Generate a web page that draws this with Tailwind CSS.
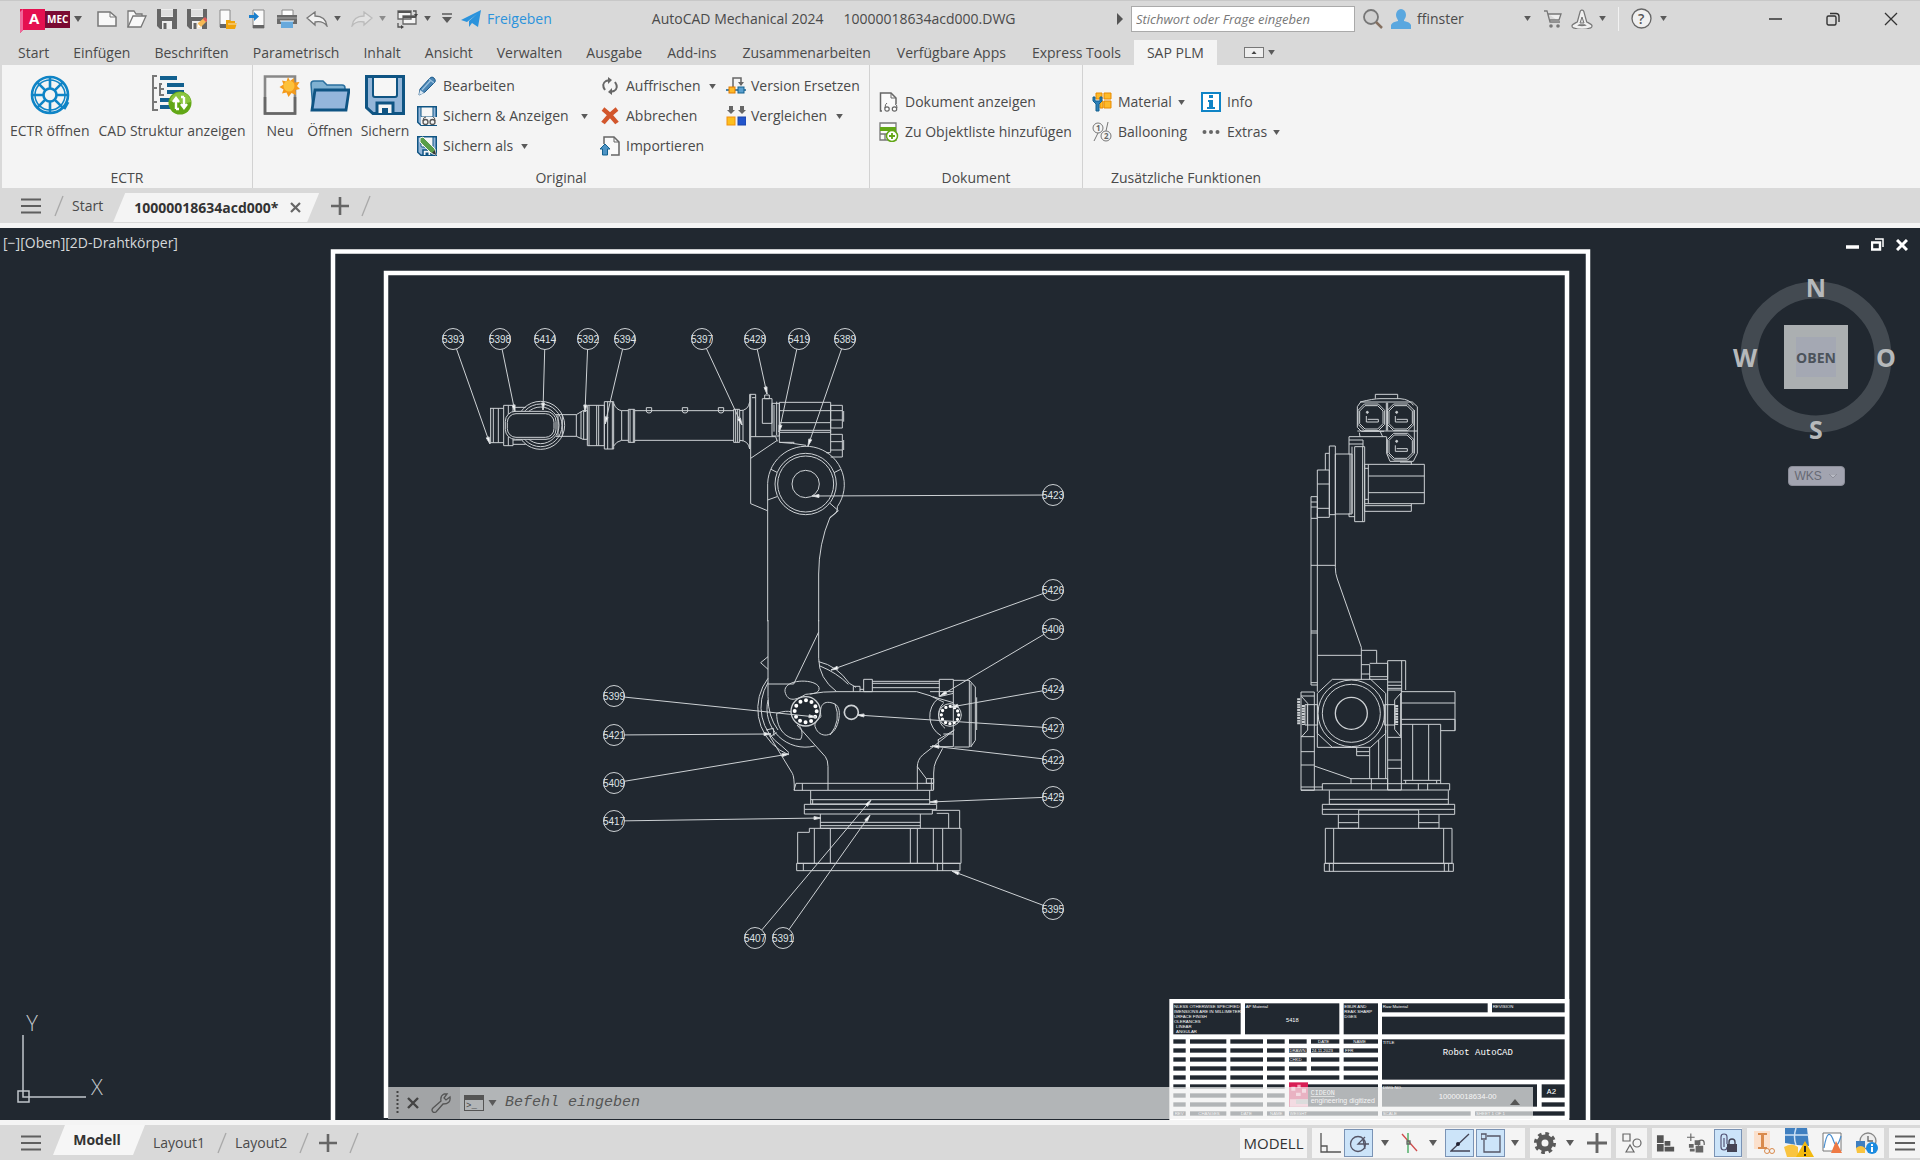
<!DOCTYPE html>
<html lang="de">
<head>
    <meta charset="UTF-8">
    <meta name="viewport" content="width=device-width, initial-scale=1.0">
    <title>AutoCAD Mechanical 2024</title>
    <script src="https://cdn.jsdelivr.net/npm/@tailwindcss/browser@4"></script>
</head>
<body class="flex flex-col h-screen overflow-hidden bg-[#d9d9d9] text-[#4a4a4a] text-sm leading-5 whitespace-nowrap font-['Open_Sans','Noto_Sans',sans-serif]">

    <!-- Shared symbols -->
    <svg class="hidden">
        <symbol id="caret" viewBox="0 0 8 6"><path d="M0 0h8L4 6z" fill="#5a5a5a"/></symbol>
        <symbol id="slash" viewBox="0 0 10 22"><path d="M1 21L9 1" stroke="#a8a8a8" stroke-width="1.3"/></symbol>
        <symbol id="burger" viewBox="0 0 20 16"><path d="M0 1.5h20M0 8h20M0 14.5h20" stroke="#5f5f5f" stroke-width="2.2"/></symbol>
        <symbol id="plus" viewBox="0 0 18 18"><path d="M9 0v18M0 9h18" stroke="#666" stroke-width="2.6"/></symbol>
        <symbol id="disk" viewBox="0 0 20 20">
            <path d="M0 0h20v20H3l-3-3z" fill="#666"/><path d="M4 0h12v8H4z" fill="#eee"/><path d="M4 2h12M4 4h12M4 6h12" stroke="#bbb" stroke-width=".6"/><path d="M5 12h10v8H5z" fill="#eee"/><path d="M6.500 14h3v6h-3z" fill="#666"/>
        </symbol>
        <symbol id="bluedisk" viewBox="0 0 40 40">
            <path d="M1.500 1.500h37v37H8l-6.500-6z" fill="#94b6d9" stroke="#0f5483" stroke-width="3"/><path d="M8 2h24v18q0 2-2 2H10q-2 0-2-2z" fill="#f6f6f6" stroke="#0f5483" stroke-width="2"/><path d="M12 38V28h16v10" fill="#f6f6f6" stroke="#0f5483" stroke-width="3"/><path d="M17 33h6v5h-6z" fill="#0f5483"/>
        </symbol>
    </svg>

    <!-- Title bar -->
    <header class="flex items-center h-9 shrink-0 border-t border-[#c8c8c8]">
        <button class="flex items-center ml-5 mr-2.5" aria-label="Anwendungsmenü">
            <svg class="w-[50px] h-6 mt-1" viewBox="0 0 50 24"><path d="M0 0h25v21H3l-3 3z" fill="#e51050"/><path d="M0 24V3l3-3v21z" fill="#f0679a"/><path d="M25 2h25v17H25z" fill="#7a0a33"/><text x="9" y="15" fill="#fff" font-size="15" font-weight="700">A</text><text x="27" y="14" fill="#fff" font-size="10" font-weight="700">MEC</text></svg>
            <svg class="w-2 h-[6px] ml-1"><use href="#caret"/></svg>
        </button>
        <nav class="flex items-center" aria-label="Schnellzugriff">
            <button class="w-[30px] flex justify-center" aria-label="Neu"><svg class="w-5 h-5" viewBox="0 0 20 20"><path d="M1 3h12l6 5v9H1z" fill="#f8f8f8" stroke="#777" stroke-width="1.500"/><path d="M13 3v5h6" fill="none" stroke="#777"/></svg></button>
            <button class="w-[30px] flex justify-center" aria-label="Öffnen"><svg class="w-5 h-5" viewBox="0 0 20 20"><path d="M1 18V2h6l2 3h6v4" fill="#f8f8f8" stroke="#777" stroke-width="1.300"/><path d="M1 18L6 7h13l-5 11z" fill="#f8f8f8" stroke="#777" stroke-width="1.300"/></svg></button>
            <button class="w-[30px] flex justify-center" aria-label="Speichern"><svg class="w-5 h-5"><use href="#disk"/></svg></button>
            <button class="w-[30px] flex justify-center" aria-label="Speichern unter"><svg class="w-5 h-5" viewBox="0 0 20 20"><use href="#disk" width="20" height="20"/><path d="M10 19l1-5 6-5 3 3-6 6z" fill="#f7b955"/><path d="M10 19l1-4 3 3z" fill="#fff"/><path d="M16 10l2-2 3 3-2 2z" fill="#e05a5a"/></svg></button>
            <button class="w-[30px] flex justify-center" aria-label="Aus Web öffnen"><svg class="w-5 h-5" viewBox="0 0 20 20"><path d="M3 1h10v17H3z" fill="#fafafa" stroke="#888"/><path d="M3 15h8v4H3z" fill="#666"/><path d="M9 11h4l1 1h4v2h2l-2 6H9z" fill="#f0a30a"/><path d="M11 15h9" stroke="#fff" stroke-width=".7"/></svg></button>
            <button class="w-[30px] flex justify-center" aria-label="In Web speichern"><svg class="w-5 h-5" viewBox="0 0 20 20"><path d="M6 1h11v18H6z" fill="#fafafa" stroke="#888"/><path d="M6 16h11v3H6z" fill="#666"/><path d="M2 6h5V3l5 4.500L7 12V9H2z" fill="#1b7fcc"/></svg></button>
            <button class="w-[30px] flex justify-center" aria-label="Plotten"><svg class="w-5 h-5" viewBox="0 0 20 20"><path d="M5 1h11v6H5z" fill="#fff" stroke="#888"/><path d="M0 6h20v9H0z" fill="#6b6b6b"/><path d="M0 9h20" stroke="#aaa"/><path d="M4 12h12v7H4z" fill="#67a9dc"/><path d="M3 12h14" stroke="#fff"/></svg></button>
            <button class="w-[30px] flex justify-center" aria-label="Zurück"><svg class="w-[22px] h-4" viewBox="0 0 22 16"><path d="M1 7l8-6v4c6 0 11 2 12 10-3-4-7-5-12-4v3z" fill="#f2f2f2" stroke="#777" stroke-width="1.300"/></svg></button>
            <svg class="w-[7px] h-[5px] ml-0.5"><use href="#caret"/></svg>
            <button class="w-[30px] flex justify-center ml-1.5" aria-label="Wiederholen"><svg class="w-[22px] h-4" viewBox="0 0 22 16"><path d="M21 7l-8-6v4C7 5 2 7 1 15c3-4 7-5 12-4v3z" fill="#e2e2e2" stroke="#bbb" stroke-width="1.300"/></svg></button>
            <svg class="w-[7px] h-[5px] ml-0.5 opacity-60"><use href="#caret"/></svg>
            <button class="w-[30px] flex justify-center ml-1.5" aria-label="Fenster wechseln"><svg class="w-[22px] h-5" viewBox="0 0 22 20"><path d="M2 2h13v8H2zM7 7h13v8H7z" fill="#f4f4f4" stroke="#666" stroke-width="1.300"/><path d="M2 3h13M7 8h13" stroke="#555" stroke-width="2"/><path d="M17 2h3v4M5 18H2v-4" fill="none" stroke="#555" stroke-width="1.300"/><path d="M18 5h4l-2 3zM5 16v4l3-2z" fill="#444"/></svg></button>
            <svg class="w-[7px] h-[5px] ml-0.5"><use href="#caret"/></svg>
            <button class="w-3 ml-2.5" aria-label="Anpassen"><svg class="w-3 h-3" viewBox="0 0 12 12"><path d="M1 1h10" stroke="#5a5a5a" stroke-width="1.500"/><path d="M1 4h10l-5 6z" fill="#5a5a5a"/></svg></button>
        </nav>
        <button class="flex items-center gap-1.5 ml-2 text-[#2b93dc]">
            <svg class="w-5 h-[18px]" viewBox="0 0 20 18"><path d="M0 10L20 0l-3 17-6-4-3 4v-6L16 4 6 12z" fill="#2b93dc"/></svg>
            Freigeben
        </button>
        <h1 class="flex-1 flex gap-5 pl-[100px]"><span>AutoCAD Mechanical 2024</span><span>10000018634acd000.DWG</span></h1>
        <svg class="w-[6px] h-3 mr-2" viewBox="0 0 6 12"><path d="M0 0l6 6-6 6z" fill="#555"/></svg>
        <input type="text" aria-label="Suche" placeholder="Stichwort oder Frage eingeben" class="w-56 h-[26px] px-1 bg-white border border-[#aaa] text-[13px] italic placeholder:text-[#777]">
        <button class="ml-2" aria-label="Suchen"><svg class="w-5 h-5" viewBox="0 0 20 20"><circle cx="8" cy="8" r="7" fill="#d0d0d0" stroke="#777" stroke-width="1.800"/><path d="M13 13l6 6" stroke="#857060" stroke-width="2.500"/></svg></button>
        <button class="flex items-center ml-2 w-[140px] gap-1.5">
            <svg class="w-5 h-5" viewBox="0 0 20 20"><path d="M0 20v-4q1-3 7-4V9h6v3q6 1 7 4v4z" fill="#5aa7df"/><ellipse cx="10" cy="6" rx="5" ry="6" fill="#5aa7df"/></svg>
            ffinster
            <svg class="w-[7px] h-[5px] ml-auto"><use href="#caret"/></svg>
        </button>
        <button class="ml-3" aria-label="App Store"><svg class="w-5 h-5" viewBox="0 0 20 20"><path d="M1 2h3l3 11h10M5 5h13l-2 6H7" fill="#eee" stroke="#777" stroke-width="1.300"/><circle cx="8" cy="17" r="1.800" fill="#777"/><circle cx="15" cy="17" r="1.800" fill="#777"/></svg></button>
        <button class="ml-2 flex items-center gap-1.5" aria-label="Autodesk App"><svg class="w-[22px] h-5" viewBox="0 0 22 20" fill="none"><path d="M11 3L8 14h6zM8 14l-5 3M14 14l5 3M3 17q8 3 16 0" stroke="#777" stroke-width="5" stroke-linecap="round" stroke-linejoin="round"/><path d="M11 3L8 14h6zM8 14l-5 3M14 14l5 3M3 17q8 3 16 0" stroke="#f0f0f0" stroke-width="2.600" stroke-linecap="round" stroke-linejoin="round"/><path d="M11 8l-2 6h4z" fill="#d9d9d9" stroke="#777"/></svg><svg class="w-[7px] h-[5px]"><use href="#caret"/></svg></button>
        <span class="w-px h-6 bg-[#f2f2f2] ml-3 mr-3"></span>
        <button class="flex items-center gap-2" aria-label="Hilfe"><svg class="w-[21px] h-[21px]" viewBox="0 0 21 21"><circle cx="10.500" cy="10.500" r="9.500" fill="#f0f0f0" stroke="#666" stroke-width="1.300"/><text x="7" y="15.500" font-size="14" fill="#555" font-weight="600">?</text></svg><svg class="w-[7px] h-[5px]"><use href="#caret"/></svg></button>
        <div class="flex items-center gap-11 ml-[102px] mr-[22px]">
            <button aria-label="Minimieren"><svg class="w-[13px] h-[14px]" viewBox="0 0 13 14"><path d="M0 7h13" stroke="#333" stroke-width="1.500"/></svg></button>
            <button aria-label="Wiederherstellen"><svg class="w-[14px] h-[14px]" viewBox="0 0 14 14" fill="none" stroke="#333" stroke-width="1.400"><rect x="1" y="4" width="9" height="9" rx="1.500"/><path d="M4 1.500h6q3 0 3 3V10"/></svg></button>
            <button aria-label="Schließen"><svg class="w-[14px] h-[14px]" viewBox="0 0 14 14"><path d="M1 1l12 12M13 1L1 13" stroke="#333" stroke-width="1.300"/></svg></button>
        </div>
    </header>

    <!-- Ribbon tabs -->
    <nav class="flex items-end h-[29px] shrink-0 pl-1.5">
        <button class="h-[25px] px-3">Start</button>
        <button class="h-[25px] px-3">Einfügen</button>
        <button class="h-[25px] px-3">Beschriften</button>
        <button class="h-[25px] px-3">Parametrisch</button>
        <button class="h-[25px] px-3">Inhalt</button>
        <button class="h-[25px] px-3">Ansicht</button>
        <button class="h-[25px] px-3">Verwalten</button>
        <button class="h-[25px] px-3">Ausgabe</button>
        <button class="h-[25px] px-[13px]">Add-ins</button>
        <button class="h-[25px] px-[13px]">Zusammenarbeiten</button>
        <button class="h-[25px] px-[13px]">Verfügbare Apps</button>
        <button class="h-[25px] px-[13px]">Express Tools</button>
        <button class="h-[25px] px-[13px] bg-[#f4f4f4]">SAP PLM</button>
        <button class="h-[25px] ml-[27px] flex items-center gap-1" aria-label="Multifunktionsleiste minimieren">
            <svg class="w-5 h-[11px]" viewBox="0 0 20 11"><rect x=".5" y=".5" width="19" height="10" fill="#eee" stroke="#777"/><path d="M7.500 7h5L10 4z" fill="#444"/></svg>
            <svg class="w-[7px] h-[5px]"><use href="#caret"/></svg>
        </button>
    </nav>

    <!-- Ribbon -->
    <section class="flex h-[123px] shrink-0 bg-[#f4f4f4] border-l-2 border-[#d9d9d9]">
        <div class="flex flex-col w-[251px] border-r border-[#d2d2d2]">
            <div class="flex flex-1 pt-[10px] pl-2 gap-[9px]">
                <button class="flex flex-col items-center gap-[6px] self-start">
                    <svg class="w-10 h-10" viewBox="0 0 40 40" fill="none" stroke="#0f84c6" stroke-width="2.600"><circle cx="20" cy="20" r="18"/><circle cx="20" cy="20" r="6.500"/><path d="M20 2v11.500M20 26.500V38M2 20h11.500M26.500 20H38M7.300 7.300l8 8M24.700 24.700l8 8M32.700 7.300l-8 8M15.300 24.700l-8 8"/><circle cx="20" cy="20" r="15" stroke-width="1.500"/><path d="M34 34l4-7" stroke-width="3"/></svg>
                    <span>ECTR öffnen</span>
                </button>
                <button class="flex flex-col items-center gap-[6px] self-start">
                    <svg class="w-10 h-10" viewBox="0 0 40 40"><path d="M5 1H1v34h5M1 13h4M1 27h4M10 9h-2v11h4M8 14h4" fill="none" stroke="#777" stroke-width="2"/><path d="M8 1h17v4H8zM15 8h17v4H15zM15 15h17v4H15zM8 23h14v4H8zM8 30h14v4H8z" fill="#12608f"/><circle cx="28" cy="28" r="11.500" fill="#62a716"/><path d="M28 17a11 11 0 0 1 11 10q-10 3-21-1a11 11 0 0 1 10-9z" fill="#8bc53f"/><path d="M24 34V25M21 27l3-4 3 4M27 34h-3M32 22v9M29 29l3 4 3-4M29 22h3" fill="none" stroke="#fff" stroke-width="2.400"/></svg>
                    <span>CAD Struktur anzeigen</span>
                </button>
            </div>
            <h2 class="text-center h-5">ECTR</h2>
        </div>
        <div class="flex flex-col w-[617px] border-r border-[#d2d2d2]">
            <div class="flex flex-1 pt-[6px] pl-[7px]">
                <button class="flex flex-col items-center w-10 gap-[6px] pt-1 self-start">
                    <svg class="w-10 h-10" viewBox="0 0 40 40"><path d="M5 1.500h30v37H5z" fill="#f4f4f4" stroke="#888" stroke-width="2.600"/><path d="M5 22v16.500h30V22" fill="none" stroke="#666" stroke-width="2.600"/><path d="M28 2l2 4 4-3 .5 4.500 5-.5-2.500 4 3 3-4.500 1 .5 5-4.500-2-3 4-2-4.500-4.500 1 1.500-4-4-2.500 4-2.500-1.500-4 4.500 1z" fill="#f49a1a"/><circle cx="29" cy="11" r="5.500" fill="#fcc13a"/></svg>
                    <span>Neu</span>
                </button>
                <button class="flex flex-col items-center w-[52px] ml-1 gap-[6px] pt-1 self-start">
                    <svg class="w-10 h-10" viewBox="0 0 40 40"><path d="M3 35L1 9q0-3 3-3h9l4 4h15q3 0 3 3v5" fill="#7fb1d2" stroke="#2a6f9e" stroke-width="1.500"/><path d="M5 15h34l-3 20H2z" fill="#94b6dc" stroke="#0f5483" stroke-width="2.800"/></svg>
                    <span>Öffnen</span>
                </button>
                <button class="flex flex-col items-center w-[54px] ml-0.5 gap-[6px] pt-1 self-start">
                    <svg class="w-10 h-10"><use href="#bluedisk"/></svg>
                    <span>Sichern</span>
                </button>
                <div class="flex flex-col w-[183px] ml-[5px]">
                    <button class="flex items-center gap-1.5 h-[30px]"><svg class="w-5 h-5" viewBox="0 0 20 20"><path d="M2 19l1-6L13 2q2-2 4 0t1 4L8 16z" fill="#4b86b5" stroke="#1f5c8c"/><path d="M2 19l1-5 4 3z" fill="#dce8f2"/><path d="M5 14l9-10M12 3l5 4" stroke="#9cc2df" stroke-width="1.200"/></svg>Bearbeiten</button>
                    <button class="flex items-center gap-1.5 h-[30px]"><svg class="w-5 h-5" viewBox="0 0 20 20"><use href="#bluedisk" width="20" height="20"/><path d="M4 11h16v8H4z" fill="#f4f4f4"/><path d="M6 15q0-4 3-4M18 15q0-4-2-4" fill="none" stroke="#555"/><circle cx="8.500" cy="16" r="2.500" fill="none" stroke="#555" stroke-width="1.300"/><circle cx="15.500" cy="16" r="2.500" fill="none" stroke="#555" stroke-width="1.300"/></svg>Sichern &amp; Anzeigen<svg class="w-[7px] h-[5px] ml-1.5"><use href="#caret"/></svg></button>
                    <button class="flex items-center gap-1.5 h-[30px]"><svg class="w-5 h-5" viewBox="0 0 20 20"><use href="#bluedisk" width="20" height="20"/><path d="M3 2l3-1 12 12 1 6-5-2L3 6z" fill="#5a9e4a" stroke="#f4f4f4"/><path d="M15 17l4 2-1-5z" fill="#333"/></svg>Sichern als<svg class="w-[7px] h-[5px] ml-0.5"><use href="#caret"/></svg></button>
                </div>
                <div class="flex flex-col w-[126px]">
                    <button class="flex items-center gap-1.5 h-[30px]"><svg class="w-5 h-5" viewBox="0 0 20 20" fill="none" stroke="#666" stroke-width="2"><path d="M5 14Q1 8 6 5l4-1M15 6q4 6-1 9l-4 1"/><path d="M8 1l4 3-4 4zM12 12l-4 4 4 3z" fill="#666" stroke="none"/></svg>Auffrischen<svg class="w-[7px] h-[5px] ml-0.5"><use href="#caret"/></svg></button>
                    <button class="flex items-center gap-1.5 h-[30px]"><svg class="w-5 h-5" viewBox="0 0 20 20"><path d="M3 3q8 6 14 14M17 3Q9 9 3 17" stroke="#d2562c" stroke-width="4.500" fill="none"/></svg>Abbrechen</button>
                    <button class="flex items-center gap-1.5 h-[30px]"><svg class="w-5 h-5" viewBox="0 0 20 20"><path d="M4 8V1h10l5 5v13h-8" fill="#fafafa" stroke="#666" stroke-width="1.500"/><path d="M14 1v5h5" fill="none" stroke="#666"/><path d="M5 8l5 5H7.500v6h-5v-6H0z" fill="#4d93c4" stroke="#12608f"/></svg>Importieren</button>
                </div>
                <div class="flex flex-col">
                    <button class="flex items-center gap-[5px] h-[30px]"><svg class="w-5 h-5" viewBox="0 0 20 20"><path d="M7 11V2h8v7" fill="none" stroke="#666" stroke-width="1.500"/><path d="M12 6h6l-3 4z" fill="#666"/><path d="M0 14h20" stroke="#12608f" stroke-width="1.500"/><rect x="3" y="11" width="6" height="6" fill="#fdb92a" stroke="#e07b00"/><rect x="12" y="11" width="6" height="6" fill="#5aa0d0" stroke="#12608f"/></svg>Version Ersetzen</button>
                    <button class="flex items-center gap-[5px] h-[30px]"><svg class="w-5 h-5" viewBox="0 0 20 20"><path d="M3 0h4v4h2l-4 4-4-4h2zM14 0h4v4h2l-4 4-4-4h2z" fill="#666"/><rect x="1" y="11" width="8" height="8" fill="#fcbf1e" stroke="#f0900f"/><rect x="12" y="11" width="8" height="8" fill="#2255cc" stroke="#1a44aa"/></svg>Vergleichen<svg class="w-[7px] h-[5px] ml-1"><use href="#caret"/></svg></button>
                </div>
            </div>
            <h2 class="text-center h-5">Original</h2>
        </div>
        <div class="flex flex-col w-[213px] border-r border-[#d2d2d2]">
            <div class="flex flex-col flex-1 pt-[22px] pl-[9px]">
                <button class="flex items-center gap-1.5 h-[30px]"><svg class="w-5 h-5" viewBox="0 0 20 20"><path d="M3 19H1.500V1H12l5 5v6" fill="#fafafa" stroke="#666" stroke-width="1.500"/><path d="M12 1v5h5" fill="none" stroke="#666"/><path d="M6 16q0-4 2-5M18 16q0-4-2-4" fill="none" stroke="#666"/><circle cx="8" cy="17" r="2.200" fill="#fff" stroke="#666" stroke-width="1.200"/><circle cx="15.500" cy="17" r="2.200" fill="#fff" stroke="#666" stroke-width="1.200"/></svg>Dokument anzeigen</button>
                <button class="flex items-center gap-1.5 h-[30px]"><svg class="w-5 h-5" viewBox="0 0 20 20"><path d="M1 1h16v17H1zM1 12h16M6 12v6" fill="#fafafa" stroke="#777" stroke-width="1.300"/><path d="M1 5h16v4H1z" fill="#62a716"/><circle cx="13" cy="14" r="5.500" fill="#fff" stroke="#62a716" stroke-width="1.500"/><path d="M13 11v6M10 14h6" stroke="#62a716" stroke-width="1.800"/></svg>Zu Objektliste hinzufügen</button>
            </div>
            <h2 class="text-center h-5">Dokument</h2>
        </div>
        <div class="flex flex-col w-[206px]">
            <div class="flex flex-1 pt-[22px] pl-[9px]">
                <div class="flex flex-col w-[109px]">
                    <button class="flex items-center gap-1.5 h-[30px]"><svg class="w-5 h-5" viewBox="0 0 20 20"><path d="M4 1h6v6H4zM12 1h7v6h-7zM12 9h7v7h-7zM8 9h3v7H8z" fill="#fdba2a" stroke="#e88a00"/><path d="M1 5v4l3 3v7h3v-7l3-3V5H8v4H3V5z" fill="#2d7fb8" stroke="#12608f"/></svg>Material<svg class="w-[7px] h-[5px]"><use href="#caret"/></svg></button>
                    <button class="flex items-center gap-1.5 h-[30px]"><svg class="w-5 h-5" viewBox="0 0 20 20" fill="none" stroke="#777"><circle cx="6" cy="6" r="5"/><circle cx="14" cy="14" r="5"/><path d="M6 11L2 19M14 9l2-9"/><text x="4" y="9" font-size="8" fill="#666" stroke="none" font-weight="700">1</text><text x="12" y="17" font-size="8" fill="#666" stroke="none" font-weight="700">2</text></svg>Ballooning</button>
                </div>
                <div class="flex flex-col">
                    <button class="flex items-center gap-1.5 h-[30px]"><svg class="w-5 h-5" viewBox="0 0 20 20"><rect x="1" y="1" width="18" height="18" fill="#fff" stroke="#0f84c6" stroke-width="2"/><path d="M8 3h4v3H8zM7 8h5v7h2v2H6v-2h2v-5H7z" fill="#0f84c6"/></svg>Info</button>
                    <button class="flex items-center gap-1.5 h-[30px]"><svg class="w-5 h-5" viewBox="0 0 20 20" fill="#666"><circle cx="3.500" cy="10" r="2"/><circle cx="10" cy="10" r="2"/><circle cx="16.500" cy="10" r="2"/></svg>Extras<svg class="w-[7px] h-[5px]"><use href="#caret"/></svg></button>
                </div>
            </div>
            <h2 class="text-center h-5">Zusätzliche Funktionen</h2>
        </div>
    </section>

    <!-- Document tabs -->
    <nav class="flex items-center h-[35px] shrink-0 pl-5">
        <button aria-label="Menü"><svg class="w-[22px] h-4"><use href="#burger"/></svg></button>
        <svg class="w-[10px] h-[22px] ml-3"><use href="#slash"/></svg>
        <button class="ml-2">Start</button>
        <div class="flex items-center self-end mb-px ml-2.5 h-[29px] w-[206px] pl-[21px] gap-3 bg-[#f4f4f4] [clip-path:polygon(12px_0,100%_0,194px_100%,0_100%)]">
            <button class="font-bold text-[#333]">10000018634acd000*</button>
            <button aria-label="Tab schließen"><svg class="w-[11px] h-[11px]" viewBox="0 0 11 11"><path d="M1 1l9 9M10 1l-9 9" stroke="#666" stroke-width="2.200"/></svg></button>
        </div>
        <button class="ml-3" aria-label="Neue Zeichnung"><svg class="w-[18px] h-[18px]"><use href="#plus"/></svg></button>
        <svg class="w-[10px] h-[22px] ml-3"><use href="#slash"/></svg>
    </nav>

    <!-- Model space -->
    <main class="relative flex-1 min-h-0 bg-[#212830] border-y-[5px] border-[#f4f4f4] overflow-hidden">
        <svg id="drawing" class="block w-full h-full" viewBox="0 228 1920 892" preserveAspectRatio="xMidYMid slice">
            <!-- Sheet frames -->
            <g fill="none" stroke="#fff" stroke-width="4.500">
                <path d="M333 1125V251.500H1588V1125"/>
                <path d="M386 1118V273H1567V1118"/>
            </g>

            <!-- Upper arm -->
            <svg x="470" y="310" width="420" height="800" viewBox="0 0 1260 2400" fill="none" stroke="#cdd1d4" stroke-width="3">
                <path d="M62 295v103M70 295v103M85 295v103M60 295h41M60 398h41M101 286h28v121h-28zM115 286v28M115 380v27M129 292h38M129 403h38M129 305h25M129 390h25"/>
                <circle cx="212" cy="346" r="72"/><circle cx="212" cy="346" r="64"/><circle cx="212" cy="346" r="55"/>
                <rect x="106" y="304" width="152" height="84" rx="30" fill="#212830"/><rect x="112" y="311" width="140" height="71" rx="26"/>
                <path d="M258 314h61v65h-61M264 314v65M277 314v65M319 314l20-12h13v86h-13l-20-9M333 305v80M341 302v86M352 286h51v121h-51zM357 286v121M380 286v121M386 286v121M403 275h28v142h-28zM413 275v142M427 275v142M431 280q8 20 24 22h20M431 408q8-14 24-17h20M455 302v89M475 298h19v99h-19zM480 298v99M490 298v99M494 302h298M494 391h298"/>
                <path d="M529 293v10q0 6 8 6t8-6v-10zM637 293v10q0 6 8 6t8-6v-10zM745 293v10q0 6 8 6t8-6v-10z"/>
                <path d="M791 298h18v99h-18zM797 298v99M803 298v99M809 302q26 0 30-26M809 391q26 0 30 26M819 300v94M839 417V253h18v127M842 253v328M846 263h11"/>
                <path d="M877 266h29v74h-29zM884 255h14v11h-14zM906 280h22v98h-22zM912 285v80M920 275v100M928 277h154v90h-154zM928 302h154M928 338h154M928 361h154M1082 286h35v68h-35zM1082 302h35M1082 330h35M1121 303v32M928 367v30h45M1082 361v66M1082 373h35v68h-35M1082 395h35M1082 420h35M1121 390v30M842 380h75l5 14M842 445l80-54M842 581l50 21M928 397q40 2 80 9M1068 428h14"/>
                <path d="M893 690V520a115 115 0 1 1 209 70q2 10-4 18l-18 14q-34 80-34 170V934M893 690V934"/>
                <circle cx="1007" cy="522" r="92"/><circle cx="1007" cy="522" r="84"/><circle cx="1007" cy="522" r="41"/>
                <path d="M903 478l18 9M1112 478l-20 10M893 570l28-10M1080 580l25 22-25 22"/>
            </svg>

            <!-- Lower arm, carousel and base -->
            <svg x="590" y="620" width="500" height="340" viewBox="0 0 1500 1020" fill="none" stroke="#cdd1d4" stroke-width="3">
                <path d="M534 0v230q0 60 30 100M686 0v115q0 60 54 100M686 36L611 192H534M534 110l-22 18 22 20M534 175a150 150 0 0 0 35 215l26 14M534 188a140 140 0 0 0 41 190l22 20M534 240a115 115 0 0 0 140 138M528 330l22-5 2 22M540 350l20-12"/>
                <path d="M585 215c-5-40 95-40 102-12 3 18-20 18-40 20-26 16-54 26-62-8zM560 280c0 50 30 80 72 78 10-20 0-40-12-50M560 280q30-10 44-4M735 252c-35-15-48 5-42 38-10 10-24 20-16 34 10 28 55 35 68-20 6-25 3-45-10-52zM735 252q20 50-15 93"/>
                <path d="M686 125q55 12 92 65l20 12M690 138q50 20 85 55M740 215h240l40 12 42 20M660 222q40-8 80-7M790 199h20v16M790 199v16M810 208h12M821 178h26v37h-26zM847 184h201M847 190h201M847 203h201M1048 178h42v42l-42 10zM1048 215h42M1090 181h48v200h-45M1138 181l18 20v160l-14 20M1143 190v190M1160 232v98M1020 215h28v15M1090 220v160"/>
                <path d="M1045 235a68 68 0 0 0 8 112M1060 250a50 50 0 0 0 5 75M1028 230l62 18M1093 330l-50 30M1090 380h-70M1060 342h30M1045 360v20"/>
                <circle cx="647" cy="274" r="44" stroke-width="4"/><circle cx="647" cy="274" r="33" stroke="#fff" stroke-width="12" stroke-linecap="round" stroke-dasharray="0 17.280"/>
                <circle cx="1080" cy="285" r="34"/><circle cx="1080" cy="285" r="26" stroke="#fff" stroke-width="10" stroke-linecap="round" stroke-dasharray="0 13.610"/>
                <circle cx="784" cy="277" r="21" stroke-width="5"/>
                <path d="M621 315l85 95q8 10 8 30v70M1093 330l-95 75q-16 14-16 36v68M537 345l70 115q6 10 6 50M1058 385l-20 38q-7 14-7 36v50M982 440l27 36M1009 476h22v14h-22zM1024 476v34"/>
                <path d="M618 490h412v21H612l6-21M637 490v21M662 511v41h357v-41M662 539h357M668 539v13M643 553h397v15H643zM643 568v14h384v-14M691 582v43h300v-43M691 607h300M691 617h300M1027 571h82v54M1040 580h36v45"/>
                <path d="M623 637h35v-12h455v105H623zM673 625v105M721 625v105M961 625v105M982 625v105M1030 625v105M1058 625v105M620 730h490v22H620zM640 730v22M1042 730v22M1058 730v22"/>
            </svg>

            <!-- Front view -->
            <svg x="1270" y="380" width="220" height="510" viewBox="0 0 660 1530" fill="none" stroke="#cdd1d4" stroke-width="3">
                <path d="M316 56V43h67v13M262 80l10-14h155l15 14v140l-12 24h-70l-10-24v-50M262 80v62l12 12h68M270 66q40-10 60-10h60q30 2 40 20M268 158l2 12M349 68v84M353 68v84M433 90v130M262 153h180"/>
                <path d="M283 72h42l19 19v42l-19 19h-42l-19-19V91zM371 72h42l19 19v42l-19 19h-42l-19-19V91zM371 160h42l19 19v42l-19 19h-42l-19-19v-42z"/>
                <path d="M285 77h38l16 16v38l-16 16h-38l-16-16V93zM373 77h38l16 16v38l-16 16h-38l-16-16V93zM373 165h38l16 16v38l-16 16h-38l-16-16v-38z"/>
                <path d="M289 108v18h36v-8h-32M376 108v18h36v-8h-32M376 196v18h36v-8h-32" /><g fill="#cdd1d4"><circle cx="292" cy="97" r="3"/><circle cx="380" cy="97" r="3"/><circle cx="380" cy="184" r="3"/></g>
                <path d="M237 170h112M330 153l8 17M237 170v53M237 180h42v20M237 192h42M254 200h30v225h-30zM246 200v200M278 200v225M237 400v10h17M284 253h179v118H284zM295 253v118M295 288h168M295 338h168M284 371v23h140v-23M284 377h140M390 246h34v8M284 265h11M284 358h11M196 222h50v180h-50zM240 222v180M178 198h18v206h-18zM166 270v-50h12M142 270h36v142h-36zM142 312h36M142 385h36M123 350h19v65h-19zM123 366h19M123 381h19"/>
                <path d="M123 415v500h19V400M196 402v160q0 20 6 35l72 205v98M123 556h73M123 753h19M123 759h19M142 826h132M142 915v20M123 908h19M274 811h46v38M274 854h25v44M299 850h54v48h-54M299 890h54M274 882h25M353 842h54v88M395 842v90M353 842v90M353 906h42M353 916h42M353 925h42"/>
                <circle cx="244" cy="1000" r="100"/><circle cx="244" cy="1000" r="87"/><circle cx="244" cy="1000" r="48" stroke-width="4"/>
                <path d="M142 940l45-42h115l45 42v120l-45 42H187l-45-42zM142 1040v62h116M93 936h40v295H93zM93 948h40M93 1070h40M93 1115h40M93 1155h40M133 1158l110 38h109M105 974h38v61h-38zM95 950l18 20v80l-18 20M112 974v61"/>
                <path d="M86 955v80M100 975v60M380 975v60" stroke-width="9" stroke-dasharray="6 2"/>
                <path d="M343 974h32v61h-32zM374 960l18-20v130l-18-22zM353 930v300h41V930zM353 1072h41M353 1140h41M353 1165h41M394 935h161v117h-43M394 969h161M394 1018h161M555 1018v34M394 1033h118v178M428 1033v168M476 1033v168M400 1201h112M299 1102v94M326 1080v116M347 1050v146M260 1102v25h38M260 1115h38"/>
                <path d="M157 1230v-19h382v19M93 1230h446M93 1221h64M243 1196v15M304 1196v34M353 1196v34M407 1201v10M445 1211v19M473 1211v19M500 1201v10M178 1231v42h357v-42M178 1258h357M157 1273h397v30H157zM157 1288h397M205 1303v42h61v-55h180v55h61v-42M205 1328h61M446 1328h61M166 1345h380v105H166zM191 1345v105M521 1345v105M163 1450h387v24H163zM178 1450v24M190 1450v24M523 1450v24M536 1450v24"/>
            </svg>

            <!-- Title block, cells are filled in by the script below -->
            <svg x="1160" y="990" width="420" height="135" viewBox="0 0 1260 405" font-family="'Liberation Sans',sans-serif">
                <path d="M28 27h1200v378H28z" fill="#fff"/>
                <g id="cells" fill="#212830"></g>
                <path d="M387 277h57v73h-57z" fill="#d81e55"/><path d="M394 290h12v12h-12zM412 284h10v10h-10zM426 296h12v12h-12zM408 308h14v10h-14zM390 328h54v22h-54z" fill="#f9a8bf"/><path d="M408 328h36v14h-36z" fill="#aaa"/>
                <g fill="#fff" font-size="13">
                    <text x="42" y="53">NLESS OTHERWISE SPECIFIED</text><text x="42" y="68">IMENSIONS ARE IN MILLIMETERS</text><text x="42" y="84">URFACE FINISH</text><text x="42" y="99">OLERANCES</text><text x="48" y="115">LINEAR</text><text x="48" y="130">ANGULAR</text>
                    <text x="257" y="53">AP Material</text><text x="553" y="53">EBUR AND</text><text x="553" y="68">REAK SHARP</text><text x="553" y="84">DGES</text><text x="668" y="53">Raw Material</text><text x="998" y="53">REVISION</text>
                    <text x="474" y="160">DATE</text><text x="580" y="160">NAME</text><text x="388" y="187">DRAWN</text><text x="455" y="187">24.11.2023</text><text x="555" y="187">FFR</text><text x="388" y="214">CHKD</text><text x="668" y="162">TITLE</text><text x="668" y="298">DWG NO.</text>
                    <text x="44" y="375">REV</text><text x="115" y="375">CHANGES</text><text x="242" y="375">DATE</text><text x="330" y="375">NAME</text><text x="389" y="375">WEIGHT</text><text x="668" y="375">SCALE</text><text x="948" y="375">SHEET 1 OF 1</text>
                </g>
                <g fill="#fff">
                    <text x="378" y="95" font-size="17">5418</text>
                    <text x="848" y="194" font-size="27" font-family="'Liberation Mono',monospace">Robot AutoCAD</text>
                    <text x="836" y="327" font-size="23">10000018634-00</text>
                    <text x="1160" y="311" font-size="24" font-family="'Liberation Mono',monospace">A2</text>
                    <text x="452" y="316" font-size="20" font-family="'Liberation Mono',monospace" text-decoration="underline">CIDEON</text>
                    <text x="452" y="338" font-size="21">engineering digitized</text>
                </g>
            </svg>

            <!-- Leaders and balloons -->
            <g id="balloons" fill="none" stroke="#cdd1d4" font-family="'Liberation Sans',sans-serif" font-size="10" text-anchor="middle"></g>

            <!-- UCS icon -->
            <g fill="none" stroke="#c0c5ca" stroke-width="1.500"><path d="M23 1035v62h63"/><path d="M18 1091h11v11H18z"/></g>
            <g fill="#c0c5ca" font-size="22" font-weight="300" text-anchor="middle"><text x="32" y="1031">Y</text><text x="97" y="1095">X</text></g>
        </svg>

        <div class="absolute top-[5px] left-[3px] text-[#d5d8da]">[−][Oben][2D-Drahtkörper]</div>

        <div class="absolute top-[10px] right-[12px] flex items-center gap-3">
            <button aria-label="Zeichnung minimieren"><svg class="w-[13px] h-[13px]" viewBox="0 0 13 13"><path d="M0 9h13" stroke="#fff" stroke-width="3.500"/></svg></button>
            <button aria-label="Zeichnung wiederherstellen"><svg class="w-[13px] h-[13px]" viewBox="0 0 13 13" fill="none" stroke="#fff"><path d="M1 4.500h8v7H1z" stroke-width="2.400"/><path d="M4 1h8v8" stroke-width="1.500"/></svg></button>
            <button aria-label="Zeichnung schließen"><svg class="w-[12px] h-[12px]" viewBox="0 0 12 12"><path d="M1 1l10 10M11 1L1 11" stroke="#fff" stroke-width="3"/></svg></button>
        </div>

        <!-- View cube -->
        <div class="absolute top-[34px] right-[14px] flex flex-col items-center gap-1">
            <svg class="w-[180px] h-[200px]" viewBox="-3 -10 180 200" text-anchor="middle" font-weight="700">
                <circle cx="87" cy="85" r="67" fill="none" stroke="#434a51" stroke-width="17"/>
                <rect x="55" y="53" width="64" height="64" fill="#abafb1"/><rect x="67" y="65" width="40" height="40" fill="#a4a8b3"/>
                <text x="87" y="91" font-size="14" fill="#4c535b">OBEN</text>
                <g fill="#b6b9bb" font-size="25"><text x="87" y="25">N</text><text x="87" y="167">S</text><text x="16" y="95">W</text><text x="157" y="95">O</text></g>
            </svg>
            <button class="flex items-center justify-between w-[57px] h-5 px-1.5 rounded bg-[#a2a4b0] border border-[#8b8d98] text-[#666974] text-xs leading-4 font-['Liberation_Sans',sans-serif]">WKS<svg class="w-[10px] h-[5px]" viewBox="0 0 10 5"><path d="M1 0h8L5 4z" fill="#b8bac4" stroke="#8d8f9a"/></svg></button>
        </div>

        <!-- Command line -->
        <div class="absolute left-[388px] right-[387px] bottom-[1px] h-8 flex rounded-br bg-[#ccc]/40">
            <div class="flex items-center w-[72px] pl-2 gap-3 bg-[#ccc]/60">
                <svg class="w-[3px] h-6" viewBox="0 0 3 24"><path d="M1.500 0v24" stroke="#444" stroke-width="2" stroke-dasharray="2 2"/></svg>
                <button aria-label="Befehlszeile schließen"><svg class="w-3 h-3 -ml-1" viewBox="0 0 12 12"><path d="M1 1l10 10M11 1L1 11" stroke="#444" stroke-width="2.400"/></svg></button>
                <button aria-label="Anpassen"><svg class="w-5 h-5" viewBox="0 0 20 20"><path d="M2 19q-2-2 0-4l8-7q-1-5 3-7l3 0-3 4 2 2 4-3q1 7-7 7l-7 8q-2 1-3 0z" fill="none" stroke="#555" stroke-width="1.300"/></svg></button>
            </div>
            <label for="cmd" class="flex items-center gap-1 pl-1 bg-white/50">
                <svg class="w-5 h-4" viewBox="0 0 20 16"><rect x=".5" y=".5" width="19" height="15" fill="none" stroke="#555"/><path d="M0 0h20v5H0z" fill="#555"/><text x="2" y="13" font-size="9" fill="#444" font-family="Liberation Mono">&gt;_</text></svg>
                <svg class="w-[9px] h-[6px]"><use href="#caret"/></svg>
            </label>
            <input id="cmd" type="text" placeholder="Befehl eingeben" class="flex-1 min-w-0 pl-2 bg-white/50 italic text-[15px] placeholder:text-[#555] font-['Liberation_Mono',monospace]">
            <button class="w-9 pt-3 flex justify-center bg-white/50 rounded-br" aria-label="Verlauf"><svg class="w-[10px] h-[6px]" viewBox="0 0 10 6"><path d="M0 6h10L5 0z" fill="#555"/></svg></button>
        </div>
    </main>

    <!-- Status bar -->
    <footer class="flex items-center h-[35px] shrink-0 pl-5">
        <button aria-label="Layoutmenü"><svg class="w-[22px] h-4"><use href="#burger"/></svg></button>
        <button class="self-start ml-[11px] h-[30px] w-[92px] pr-1 font-bold text-[#333] bg-[#f6f6f6] [clip-path:polygon(12px_0,100%_0,80px_100%,0_100%)]">Modell</button>
        <button class="ml-2">Layout1</button>
        <svg class="w-[10px] h-[22px] ml-3"><use href="#slash"/></svg>
        <button class="ml-2">Layout2</button>
        <svg class="w-[10px] h-[22px] ml-3"><use href="#slash"/></svg>
        <button class="ml-2.5" aria-label="Neues Layout"><svg class="w-[18px] h-[18px]"><use href="#plus"/></svg></button>
        <svg class="w-[10px] h-[22px] ml-3"><use href="#slash"/></svg>

        <div class="flex items-center gap-[5px] ml-auto h-[30px]">
            <button class="h-[30px] w-[67px] bg-[#f4f4f4] text-[#333] text-[15px]">MODELL</button>
            <div class="flex items-center h-[30px] w-[213px] bg-[#f4f4f4] pl-1">
                <button class="w-7 flex justify-center" aria-label="Ortho"><svg class="w-[21px] h-5" viewBox="0 0 21 20" fill="none" stroke="#555" stroke-width="1.300"><path d="M1 0v19h20M1 13h6v6"/></svg></button>
                <button class="w-[29px] h-7 flex items-center justify-center bg-[#cce4f9] border border-[#7a93b5]" aria-label="Polare Spur"><svg class="w-5 h-5" viewBox="0 0 20 20" fill="none" stroke="#556" stroke-width="1.300"><circle cx="9" cy="11" r="7.500"/><path d="M20 11H9l7-7M14 6l2 10"/></svg></button>
                <button class="w-6 flex justify-center" aria-label="Polare Einstellungen"><svg class="w-[10px] h-[6px]"><use href="#caret"/></svg></button>
                <button class="w-6 flex justify-center" aria-label="Isometrisch"><svg class="w-5 h-5" viewBox="0 0 20 20" fill="none" stroke-width="1.300"><path d="M3 1l15 17" stroke="#d04a4a"/><path d="M9 0v20" stroke="#3aa655"/><path d="M8 8h3v3H8z" stroke="#666"/></svg></button>
                <button class="w-6 flex justify-center" aria-label="Isometrische Optionen"><svg class="w-[10px] h-[6px]"><use href="#caret"/></svg></button>
                <button class="w-[29px] h-7 flex items-center justify-center bg-[#cce4f9] border border-[#7a93b5]" aria-label="Objektfangspur"><svg class="w-5 h-5" viewBox="0 0 20 20"><path d="M19 1L1 18h19" fill="none" stroke="#445" stroke-width="1.300"/><circle cx="8" cy="11" r="2" fill="#223"/></svg></button>
                <button class="w-[29px] h-7 ml-0.5 flex items-center justify-center bg-[#cce4f9] border border-[#7a93b5]" aria-label="Objektfang"><svg class="w-5 h-5" viewBox="0 0 20 20" fill="none" stroke="#556" stroke-width="1.300"><path d="M6 3h13v16H3V7M0 1h5v5H0z"/></svg></button>
                <button class="w-5 flex justify-center" aria-label="Fangoptionen"><svg class="w-[10px] h-[6px]"><use href="#caret"/></svg></button>
            </div>
            <div class="flex items-center h-[30px] w-[81px] bg-[#f4f4f4] pl-1 gap-2.5">
                <button class="flex items-center gap-[9px]" aria-label="Arbeitsbereich"><svg class="w-[22px] h-[22px]" viewBox="0 0 22 22"><circle cx="11" cy="11" r="6" fill="none" stroke="#5a5a5a" stroke-width="5"/><circle cx="11" cy="11" r="9" fill="none" stroke="#5a5a5a" stroke-width="4" stroke-dasharray="3.500 3.570"/></svg><svg class="w-[10px] h-[6px]"><use href="#caret"/></svg></button>
                <button class="ml-0.5" aria-label="Beschriftungsmaßstab"><svg class="w-5 h-5"><use href="#plus"/></svg></button>
            </div>
            <button class="w-[31px] h-[30px] flex items-center justify-center bg-[#f4f4f4]" aria-label="Objekte isolieren"><svg class="w-5 h-5" viewBox="0 0 20 20" fill="none" stroke="#666" stroke-width="1.200"><path d="M1 1h7v7H1zM4 19l4-7 4 7z"/><circle cx="15" cy="10" r="4"/></svg></button>
            <div class="flex items-center h-[30px] w-[90px] bg-[#f4f4f4] pl-1 gap-3">
                <svg class="w-5 h-5" viewBox="0 0 20 20" fill="#555"><path d="M1 2h7v8H1zM1 11h7v8H1zM9 8h6v5H9zM9 14h10v5H9z"/></svg>
                <svg class="w-5 h-5" viewBox="0 0 20 20" fill="#666"><path d="M4 0v8M0 4h8" stroke="#666" stroke-width="1.200"/><path d="M2 11h5v4H2zM8 7h6v5H8zM3 16h5v3H3zM9 13h8v7H9z"/><path d="M12 13v-3q0-3 3-3t3 3v2" fill="none" stroke="#666" stroke-width="1.300"/></svg>
                <button class="w-[29px] h-7 -ml-1 flex items-center justify-center bg-[#cce4f9] border border-[#7a93b5]" aria-label="Sperren"><svg class="w-5 h-5" viewBox="0 0 20 20"><path d="M9 11V4q0-3-3-3T3 4v10q0 3 3 3t3-3M6 5v9" fill="none" stroke="#557" stroke-width="1.200"/><path d="M9 11h10v8H9z" fill="#445"/><path d="M11 11V9q0-3 3-3t3 3v2" fill="none" stroke="#445" stroke-width="1.400"/></svg></button>
            </div>
            <div class="flex items-center h-[30px] w-[137px] bg-[#f4f4f4] pl-[7px] gap-2">
                <svg class="w-[22px] h-6" viewBox="0 0 22 24"><path d="M0 0h16v18H0z" fill="#fbe0cc"/><path d="M4 2h9v2h-3v12h3v2H4v-2h3V4H4z" fill="#d98a4c"/><circle cx="13" cy="20" r="2.500" fill="none" stroke="#d98a4c"/><circle cx="18" cy="20" r="2.500" fill="none" stroke="#d98a4c"/></svg>
                <svg class="w-[30px] h-[30px]" viewBox="0 0 30 30"><path d="M1 0h22l2 18-12-1L1 15z" fill="#3f7fc0"/><path d="M0 19q8-5 14 0v10H3z" fill="#f9c440"/><path d="M12 0q-3 9 0 17M1 7h24" stroke="#cfe2f4" stroke-width="1.500" fill="none"/><path d="M21 13l9 16H12z" fill="#f2b90f"/><path d="M21 18v6M21 26v2" stroke="#222" stroke-width="2"/></svg>
                <svg class="w-5 h-[22px]" viewBox="0 0 20 22"><path d="M1 1h18v18H1z" fill="#fff" stroke="#777"/><path d="M2 16Q6-8 12 10q3 8 7-6" fill="none" stroke="#4a8fd0" stroke-width="1.200"/><path d="M14 9l6 12H9z" fill="#ee7a45"/></svg>
                <svg class="w-[22px] h-[22px] ml-1.5" viewBox="0 0 22 22"><circle cx="12" cy="9" r="8" fill="#eee" stroke="#888" stroke-width="1.300"/><path d="M12 4v5h5" fill="none" stroke="#666" stroke-width="1.300"/><path d="M0 9h9v7H0z" fill="#3f7fc0"/><path d="M0 16q5-4 9 0v5H1z" fill="#f9c440"/><circle cx="16" cy="16" r="6" fill="#1b8be0"/><path d="M16 12v2M16 15v5" stroke="#fff" stroke-width="2"/></svg>
            </div>
            <button class="w-[31px] h-[30px] flex items-center justify-center bg-[#f4f4f4]" aria-label="Anpassung"><svg class="w-5 h-5"><use href="#burger"/></svg></button>
        </div>
    </footer>

    <script>
        const NS = 'http://www.w3.org/2000/svg';

        function add(parent, name, attrs, text) {
            const el = document.createElementNS(NS, name);
            for (const key in attrs) el.setAttribute(key, attrs[key]);
            if (text) el.textContent = text;
            parent.appendChild(el);
        }

        // number, balloon x, y, arrow tip x, y
        const balloons = [
            [5393, 453, 339, 490, 444], [5398, 500, 339, 515, 412], [5414, 545, 339, 543, 410],
            [5392, 588, 339, 585, 412], [5394, 625, 339, 605, 424], [5397, 702, 339, 742, 425],
            [5428, 755, 339, 767, 394], [5419, 799, 339, 779, 432], [5389, 845, 339, 808, 446],
            [5423, 1053, 495, 812, 496], [5426, 1053, 590, 831, 670], [5406, 1053, 629, 940, 696],
            [5424, 1053, 689, 951, 707], [5427, 1053, 728, 857, 715], [5422, 1053, 760, 932, 746],
            [5425, 1053, 797, 930, 802], [5395, 1053, 909, 952, 871], [5399, 614, 696, 816, 717],
            [5421, 614, 735, 771, 734], [5409, 614, 783, 789, 754], [5417, 614, 821, 821, 818],
            [5407, 755, 938, 871, 800], [5391, 783, 938, 870, 815]
        ];
        const layer = document.getElementById('balloons');
        balloons.forEach(([no, x, y, tx, ty]) => {
            const len = Math.hypot(tx - x, ty - y);
            const ux = (tx - x) / len, uy = (ty - y) / len;
            const bx = tx - ux * 7, by = ty - uy * 7;
            add(layer, 'path', { d: `M${x + ux * 10.5} ${y + uy * 10.5}L${tx} ${ty}` });
            add(layer, 'path', { d: `M${tx} ${ty}L${bx - uy * 1.5} ${by + ux * 1.5}L${bx + uy * 1.5} ${by - ux * 1.5}z`, fill: '#fff' });
            add(layer, 'circle', { cx: x, cy: y, r: 10.5 });
            add(layer, 'text', { x: x, y: y + 4, fill: '#dfe2e4', stroke: 'none' }, String(no));
        });

        // title block cells: left, top, right, bottom
        const cells = [
            [40, 40, 242, 133], [255, 40, 538, 133], [551, 40, 654, 133], [666, 40, 983, 67], [996, 40, 1214, 67],
            [666, 80, 1214, 133], [666, 148, 1214, 269], [387, 256, 538, 269], [551, 256, 654, 269],
            [387, 283, 654, 350], [666, 283, 1131, 350], [1145, 283, 1214, 323], [1145, 337, 1214, 350],
            [387, 364, 654, 377], [666, 364, 932, 377], [945, 364, 1214, 377]
        ];
        for (let row = 0; row < 9; row++) {
            const y = 148 + row * 27;
            [[40, 77], [90, 199], [211, 309], [321, 374]].forEach(([l, r]) => cells.push([l, y, r, y + 13]));
            if (row < 4) [[387, 440], [453, 538], [551, 654]].forEach(([l, r]) => cells.push([l, y, r, y + 13]));
        }
        const grid = document.getElementById('cells');
        cells.forEach(([l, t, r, b]) => add(grid, 'rect', { x: l, y: t, width: r - l, height: b - t }));
    </script>
</body>
</html>
